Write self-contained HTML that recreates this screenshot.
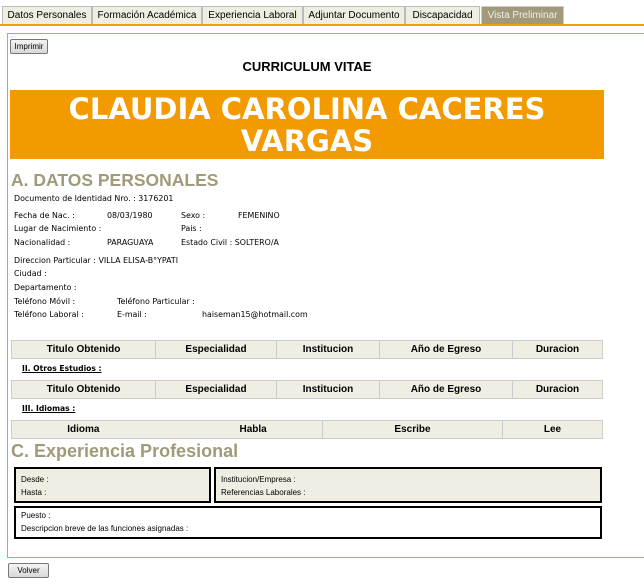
<!DOCTYPE html>
<html><head><meta charset="utf-8"><style>
*{margin:0;padding:0;box-sizing:border-box}
body{width:644px;height:585px;background:#fff;position:relative;overflow:hidden;font-family:"DejaVu Sans",Verdana,sans-serif;color:#000}
.a{position:absolute;white-space:nowrap}
.tab{position:absolute;top:6px;height:19px;background:#f0ede2;border:1px solid #bbb;border-bottom:none;font:10px "Liberation Sans",Arial,sans-serif;text-align:center;line-height:17px;color:#000;white-space:nowrap;overflow:hidden}
.btn{position:absolute;background:linear-gradient(#f4f4f4,#d8d8d8);border:1px solid #777;border-radius:2px;font:8px "Liberation Sans",Arial,sans-serif;text-align:center;line-height:13px}
.s{font-size:7.9px}
table{position:absolute;border-collapse:collapse;background:#f0ede2;font:bold 10px "Liberation Sans",Arial,sans-serif}
td{border:1px solid #ccc;text-align:center;height:18px;padding:0}
.h{color:#a09a7a;font:bold 17.5px "Liberation Sans",Arial,sans-serif}
.sub{font:bold 7.6px "DejaVu Sans",Verdana,sans-serif;text-decoration:underline}
.box{position:absolute;border:2px solid #000;font:8px "Liberation Sans",Arial,sans-serif}
.box div{position:absolute;left:5px;white-space:nowrap}
</style></head><body>
<div class="tab" style="left:2px;width:90px">Datos Personales</div>
<div class="tab" style="left:92px;width:110px">Formación Académica</div>
<div class="tab" style="left:202px;width:101px">Experiencia Laboral</div>
<div class="tab" style="left:303px;width:102px">Adjuntar Documento</div>
<div class="tab" style="left:405px;width:75px">Discapacidad</div>
<div class="tab" style="left:481px;width:83px;background:#a09a7a;color:#eee;border-color:#ccc">Vista Preliminar</div>
<div class="a" style="left:0;top:24px;width:644px;height:2px;background:#f0a000"></div>
<div class="a" style="left:7px;top:33px;width:660px;height:525px;border:1px solid #f0a000"></div>
<div class="btn" style="left:10px;top:39px;width:38px;height:15px">Imprimir</div>
<div class="a" style="left:0;width:614px;top:59px;text-align:center;font:bold 13px 'Liberation Sans',Arial,sans-serif">CURRICULUM VITAE</div>
<div class="a" style="left:10px;top:90px;width:594px;height:69px;background:#f29a00;color:#fff;text-align:center;font:bold 29px/32px 'DejaVu Sans',Verdana,sans-serif;padding-top:3px;white-space:normal">CLAUDIA CAROLINA CACERES<br>VARGAS</div>
<div class="a h" style="left:11px;top:170px">A. DATOS PERSONALES</div>
<div class="a s" style="left:14px;top:194px">Documento de Identidad Nro. : 3176201</div>
<div class="a s" style="left:14px;top:211px">Fecha de Nac. :</div>
<div class="a s" style="left:107px;top:211px">08/03/1980</div>
<div class="a s" style="left:181px;top:211px">Sexo :</div>
<div class="a s" style="left:238px;top:211px">FEMENINO</div>
<div class="a s" style="left:14px;top:224px">Lugar de Nacimiento :</div>
<div class="a s" style="left:181px;top:224px">Pais :</div>
<div class="a s" style="left:14px;top:238px">Nacionalidad :</div>
<div class="a s" style="left:107px;top:238px">PARAGUAYA</div>
<div class="a s" style="left:181px;top:238px">Estado Civil : SOLTERO/A</div>
<div class="a s" style="left:14px;top:256px">Direccion Particular : VILLA ELISA-B°YPATI</div>
<div class="a s" style="left:14px;top:269px">Ciudad :</div>
<div class="a s" style="left:14px;top:283px">Departamento :</div>
<div class="a s" style="left:14px;top:297px">Teléfono Móvil :</div>
<div class="a s" style="left:117px;top:297px">Teléfono Particular :</div>
<div class="a s" style="left:14px;top:310px">Teléfono Laboral :</div>
<div class="a s" style="left:117px;top:310px">E-mail :</div>
<div class="a s" style="left:202px;top:310px">haiseman15@hotmail.com</div>
<table style="left:11px;top:340px;width:592px"><tr><td style="width:144px">Titulo Obtenido</td><td style="width:121px">Especialidad</td><td style="width:103px">Institucion</td><td style="width:133px">Año de Egreso</td><td>Duracion</td></tr></table>
<div class="a sub" style="left:22px;top:364px">II. Otros Estudios :</div>
<table style="left:11px;top:380px;width:592px"><tr><td style="width:144px">Titulo Obtenido</td><td style="width:121px">Especialidad</td><td style="width:103px">Institucion</td><td style="width:133px">Año de Egreso</td><td>Duracion</td></tr></table>
<div class="a sub" style="left:22px;top:404px">III. Idiomas :</div>
<table style="left:11px;top:420px;width:592px"><tr><td style="width:311px;border-right:none">Idioma<span style="display:inline-block;width:140px"></span>Habla</td><td style="width:180px">Escribe</td><td>Lee</td></tr></table>
<div class="a h" style="left:11px;top:441px;font-size:18px">C. Experiencia Profesional</div>
<div class="box" style="left:14px;top:467px;width:197px;height:36px;background:#f0ede2"><div style="top:6px">Desde :</div><div style="top:19px">Hasta :</div></div>
<div class="box" style="left:214px;top:467px;width:388px;height:36px;background:#f0ede2"><div style="top:6px">Institucion/Empresa :</div><div style="top:19px">Referencias Laborales :</div></div>
<div class="box" style="left:14px;top:506px;width:588px;height:33px"><div style="top:3px">Puesto :</div><div style="top:16px">Descripcion breve de las funciones asignadas :</div></div>
<div class="btn" style="left:8px;top:563px;width:41px;height:15px">Volver</div>
</body></html>
